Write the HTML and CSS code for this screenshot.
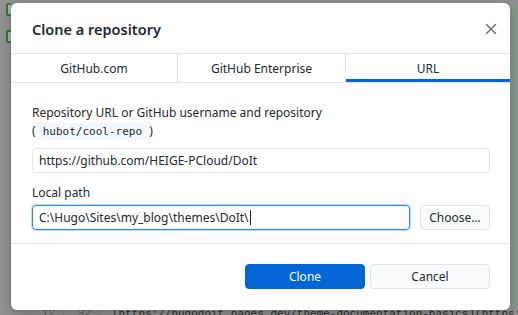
FILE: index.html
```html
<!DOCTYPE html>
<html>
<head>
<meta charset="utf-8">
<link rel="stylesheet" href="styles.css">
</head>
<body>
<div class="app">
  <div class="gutter">
    <div class="gicon"></div>
    <div class="gicon"></div>
  </div>
  <div class="editor">
    <div class="side-strip"></div>
  </div>
  <div class="bottom-line">
    <span class="ln ln-a">12</span><span class="ln ln-b">32</span>
    <span class="code-line">[https://hugodoit.pages.dev/theme-documentation-basics](https://hugodoit.pages.dev)</span>
  </div>
</div>

<div class="dialog">
  <div class="dlg-header">
    <h1 class="dlg-title">Clone a repository</h1>
    <button class="close" aria-label="Close">
      <svg width="12" height="12" viewBox="0 0 12 12"><path d="M1.5 1.5 L10.5 10.5 M10.5 1.5 L1.5 10.5" stroke="#6a737d" stroke-width="1.5" stroke-linecap="round"/></svg>
    </button>
  </div>
  <div class="tabs">
    <div class="tab">GitHub.com</div>
    <div class="tab">GitHub Enterprise</div>
    <div class="tab selected">URL</div>
  </div>
  <div class="dlg-body">
    <div class="field">
      <div class="label">Repository URL or GitHub username and repository</div>
      <div class="hint">( <code>hubot/cool-repo</code> )</div>
      <div class="input">https://github.com/HEIGE-PCloud/DoIt</div>
    </div>
    <div class="field">
      <div class="label">Local path</div>
      <div class="path-row">
        <div class="input focused">C:\Hugo\Sites\my_blog\themes\DoIt\<span class="caret"></span></div>
        <button class="btn choose">Choose...</button>
      </div>
    </div>
  </div>
  <div class="dlg-footer">
    <button class="btn primary">Clone</button>
    <button class="btn">Cancel</button>
  </div>
</div>
</body>
</html>
```

FILE: styles.css
```css
* { box-sizing: border-box; }
html, body {
  margin: 0;
  padding: 0;
  width: 518px;
  height: 315px;
  overflow: hidden;
  font-family: "Noto Sans", "Open Sans", sans-serif;
  color: #24292e;
}
.app {
  width: 518px;
  height: 315px;
  background: #8f8f8f;
  display: grid;
  grid-template-columns: 11px 1fr;
  grid-template-rows: 1fr 8px;
}
.gutter {
  background: #939393;
  display: flex;
  flex-direction: column;
  gap: 14px;
  padding-top: 3px;
  padding-left: 6px;
  border-right: 1px solid #8a8a8a;
}
.gicon {
  width: 10px;
  height: 13px;
  border: 2px solid #2f7a3f;
  border-radius: 2px;
  background: #a7b7a7;
}
.editor {
  background: #909090;
  display: flex;
  justify-content: flex-end;
}
.side-strip {
  width: 8px;
  margin-top: 5px;
  background: #88998c;
}
.bottom-line {
  grid-column: 1 / 3;
  background: #929292;
  display: flex;
  align-items: flex-end;
  font-family: "Liberation Mono", monospace;
  font-size: 11px;
  color: #2e2e2e;
  white-space: nowrap;
  overflow: hidden;
}
.ln {
  flex: none;
  text-align: right;
  color: #5a5a5a;
  padding-right: 8px;
  border-right: 1px solid #858585;
  height: 8px;
  line-height: 12px;
}
.ln-a { width: 64px; }
.ln-b { width: 36px; }
.code-line { flex: none; padding-left: 12px; line-height: 8px; height: 5px; }

.dialog {
  position: absolute;
  left: 11px;
  top: 3px;
  width: 499px;
  height: 307px;
  background: #fff;
  border-radius: 6px;
  box-shadow: 0 4px 14px rgba(0,0,0,0.25);
  display: flex;
  flex-direction: column;
  overflow: hidden;
}
.dlg-header {
  height: 51px;
  display: flex;
  align-items: center;
  justify-content: space-between;
  padding: 2px 12px 0 21px;
  border-bottom: 1px solid #e1e4e8;
}
.dlg-title {
  margin: 0;
  font-size: 14.5px;
  font-weight: 600;
  color: #24292e;
}
.close {
  border: 0;
  background: none;
  padding: 0;
  width: 14px;
  height: 14px;
  display: flex;
  align-items: center;
  justify-content: center;
}
.tabs {
  display: grid;
  grid-template-columns: 166px 168px 1fr;
  height: 29px;
  border-bottom: 1px solid #e1e4e8;
}
.tab {
  display: flex;
  align-items: center;
  justify-content: center;
  font-size: 12px;
  color: #24292e;
  border-left: 1px solid #e1e4e8;
}
.tab:first-child { border-left: 0; }
.tab.selected {
  box-shadow: inset 0 -3px 0 #0366d6;
}
.dlg-body {
  flex: 1;
  padding: 22px 20px 0 21px;
  display: flex;
  flex-direction: column;
  gap: 12px;
}
.label {
  font-size: 12px;
  line-height: 16px;
}
.hint {
  font-size: 12px;
  line-height: 18px;
  margin-top: 1px;
}
code {
  font-family: "DejaVu Sans Mono", monospace;
  font-size: 11px;
  background: #f1f8ff;
  padding: 2px 4px;
  border-radius: 4px;
}
.input {
  height: 25px;
  border: 1px solid #e1e4e8;
  border-radius: 4px;
  font-size: 12px;
  padding: 0 6px;
  display: flex;
  align-items: center;
  margin-top: 6px;
}
.field:first-child .input { margin-top: 7px; }
.path-row {
  display: flex;
  gap: 10px;
  margin-top: 4px;
}
.path-row .input {
  flex: 0 0 378px;
  margin-top: 0;
}
.input.focused {
  border-color: #2188ff;
  box-shadow: 0 0 0 1px rgba(3,102,214,0.25);
}
.caret {
  display: inline-block;
  width: 1px;
  height: 15px;
  background: #24292e;
  margin-left: 1px;
}
.btn {
  height: 25px;
  border: 1px solid #e1e4e8;
  border-radius: 4px;
  background: #fafbfc;
  font-family: "Noto Sans", "Open Sans", sans-serif;
  font-size: 12px;
  color: #24292e;
  padding: 0 8px;
}
.btn.choose { flex: 0 0 70px; }
.dlg-footer {
  height: 67px;
  border-top: 1px solid #e1e4e8;
  display: flex;
  justify-content: flex-end;
  gap: 5px;
  padding: 20px 20px 0 0;
}
.dlg-footer .btn { flex: 0 0 120px; }
.btn.primary {
  background: #0366d6;
  border-color: #0366d6;
  color: #fff;
}
```
